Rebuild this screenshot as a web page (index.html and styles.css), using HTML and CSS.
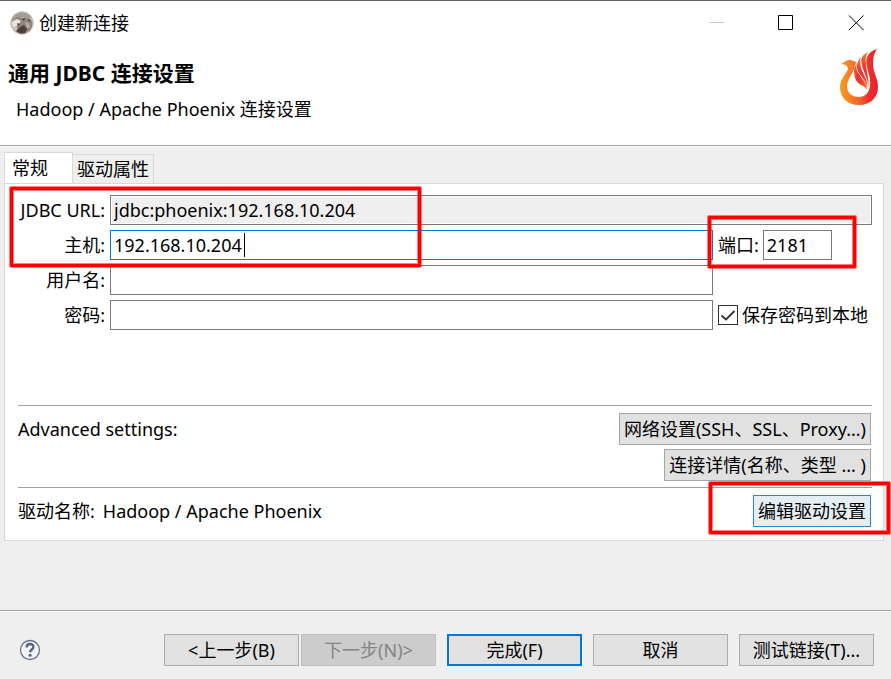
FILE: index.html
```
<!DOCTYPE html>
<html lang="zh-CN">
<head>
    <meta charset="UTF-8">
    <meta name="viewport" content="width=device-width, initial-scale=1.0">
    <title>创建新连接</title>

    <link rel="stylesheet" href="styles.css">
</head>
<body>
    <div class="dialog">
        <div class="titlebar">
            <svg class="app-icon" viewBox="0 0 24 24">
                <circle cx="12" cy="12" r="11.5" fill="#c9c1bc"/>
                <path d="M1 9 Q5 2 12 1 Q19 2 22 7 L17 8 L12 6 L6 8 L3 13Z" fill="#a59c96"/>
                <path d="M4 8 Q8 4 12 7 L18 7 L22 10 Q24 15 20 20 L15 22 Q15 17 12 16 L9 19 Q6 17 7 13Z" fill="#92857d"/>
                <path d="M2 11 L7 8 L11 10 L8 14 L3 16Z" fill="#ece7e2"/>
                <path d="M10 16 L14 14 L17 18 L15 23 L10 23 L6 20Z" fill="#4d4039"/>
                <path d="M12 8 L15 7 L14 10Z M18 8 L21 9 L19 11Z M7 12 L10 13 L8 15Z" fill="#51443d"/>
                <path d="M15 11 L19 12 L20 17 L17 17Z" fill="#b8aaa0"/>
                <circle cx="12" cy="12" r="11.2" fill="none" stroke="#c4c0bd"/>
            </svg>
            <span class="caption">创建新连接</span>
            <div class="window-btns">
                <button type="button" aria-label="最小化" disabled><svg viewBox="0 0 16 16"><path d="M1 7.5H16" stroke="#ccc"/></svg></button>
                <button type="button" aria-label="最大化"><svg viewBox="0 0 16 16"><path d="M0.5 0.5H14.5V14.5H0.5Z" fill="none" stroke="#000"/></svg></button>
                <button type="button" aria-label="关闭"><svg viewBox="0 0 16 16"><path d="M1 0.5L15.5 15M15.5 0.5L1 15" stroke="#000"/></svg></button>
            </div>
        </div>

        <div class="header">
            <div>
                <h1>通用 JDBC 连接设置</h1>
                <p>Hadoop / Apache Phoenix 连接设置</p>
            </div>
            <svg class="logo" viewBox="0 0 40 58">
                <defs>
                    <linearGradient id="flame" x1="0" y1="0" x2="1" y2="0">
                        <stop offset="0" stop-color="#f99d1e"/>
                        <stop offset="0.5" stop-color="#f3632a"/>
                        <stop offset="0.8" stop-color="#ee2a2b"/>
                        <stop offset="1" stop-color="#ee1f2d"/>
                    </linearGradient>
                    <linearGradient id="feather" x1="0" y1="0" x2="0" y2="1">
                        <stop offset="0" stop-color="#f47a2d"/>
                        <stop offset="0.45" stop-color="#ee3030"/>
                        <stop offset="0.7" stop-color="#ef442e"/>
                        <stop offset="1" stop-color="#f8a13a"/>
                    </linearGradient>
                </defs>
                <path fill="url(#flame)" d="M38 1 C28 4 26 11 28 19 C29 25 32 30 31 38 C30 45 26 49 20 49 C13 49 8 45 8 38 C8 32 13 27 15 21 C16 17 16 15 18 14 C15 14 14 12 10 12 C7 12 5 15 2 16 C5 16 8 17 9 20 C9 25 1 29 1 39 C1 50 9 57 20 57 C32 57 39 49 39 39 C39 29 34 25 34 16 C34 10 35 5 38 1Z"/>
                <path fill="url(#feather)" d="M29 4 C23 7 21 11 23 17 C24 24 30 31 29 42 C31 31 27 23 27 16 C26 11 27 8 29 4Z"/>
                <path fill="url(#feather)" d="M22 9 C17 15 17 20 20 25 C24 31 28 34 28 42 C30 32 24 27 22 20 C21 15 21 12 22 9Z"/>
                <path fill="url(#feather)" d="M18 15 C14 20 14 26 18 30 C22 34 26 36 28 42 C28 34 23 32 20 26 C17 22 17 19 18 15Z"/>
                <path fill="url(#feather)" d="M16 22 C14 29 18 35 22 37 C24 38 26 39 28 42 C27 36 23 34 20 31 C17 28 16 25 16 22Z"/>
            </svg>
        </div>

        <div class="content">
            <div class="tabs" role="tablist">
                <button type="button" class="tab active" role="tab" aria-selected="true">常规</button>
                <button type="button" class="tab" role="tab" aria-selected="false">驱动属性</button>
            </div>

            <div class="panel">
                <form class="form">
                    <label for="url">JDBC URL:</label>
                    <input class="url" id="url" type="text" value="jdbc:phoenix:192.168.10.204" readonly>

                    <label for="host">主机:</label>
                    <div class="host">
                        <input id="host" type="text" value="192.168.10.204">
                        <span class="caret"></span>
                    </div>
                    <div class="side">
                        <label for="port">端口:</label>
                        <input class="port" id="port" type="text" value="2181">
                    </div>

                    <label for="user">用户名:</label>
                    <input id="user" type="text">

                    <label class="new-row" for="password">密码:</label>
                    <input id="password" type="password">
                    <div class="side">
                        <input class="check" id="save" type="checkbox" checked>
                        <label for="save">保存密码到本地</label>
                    </div>
                </form>

                <div class="row advanced">
                    <span class="text">Advanced settings:</span>
                    <div class="buttons">
                        <button type="button">网络设置(SSH、SSL、Proxy...)</button>
                        <button type="button">连接详情(名称、类型 ... )</button>
                    </div>
                </div>

                <div class="row">
                    <span class="text">驱动名称:</span>
                    <span class="text driver">Hadoop / Apache Phoenix</span>
                    <div class="buttons">
                        <button type="button" class="hot">编辑驱动设置</button>
                    </div>
                </div>

                <div class="mark mark-url"></div>
                <div class="mark mark-port"></div>
                <div class="mark mark-driver"></div>
            </div>
        </div>

        <div class="footer">
            <button type="button" class="help" aria-label="帮助">
                <svg viewBox="0 0 22 22">
                    <circle cx="11" cy="11" r="9.5" fill="#f5f6f8" stroke="#66728c" stroke-width="1.3"/>
                    <path d="M7.6 8.4 C7.6 3.8 14.6 4 14.4 8 C14.3 10.4 11.1 10.6 11.1 13.3" fill="none" stroke="#56637f" stroke-width="2.4"/>
                    <circle cx="11.1" cy="16.3" r="1.5" fill="#56637f"/>
                </svg>
            </button>
            <button type="button" class="btn">&lt;上一步(B)</button>
            <button type="button" class="btn next" disabled>下一步(N)&gt;</button>
            <button type="button" class="btn default">完成(F)</button>
            <button type="button" class="btn">取消</button>
            <button type="button" class="btn">测试链接(T)...</button>
        </div>
    </div>
</body>
</html>
```
FILE: styles.css
```
*{
    margin: 0;
    padding: 0;
    box-sizing: border-box;
}

body, input, button{
    font-family: 'Noto Sans', 'Noto Sans CJK SC', sans-serif;
    font-size: 18px;
    line-height: 28px;
    color: #000;
}

body{
    background-color: #efefef;
}

button{
    white-space: nowrap;
}

.dialog{
    display: flex;
    flex-direction: column;
    min-height: 100vh;
    border-top: 1px solid #66656b;
}

/* title bar */
.titlebar{
    display: flex;
    align-items: center;
    height: 44px;
    padding-left: 10px;
    background: #fff;
}

.app-icon{
    width: 24px;
    height: 24px;
    margin-right: 5px;
}

.window-btns{
    display: flex;
    margin-left: auto;
}

.window-btns button{
    display: flex;
    align-items: center;
    justify-content: center;
    width: 70px;
    height: 44px;
    border: 0;
    background: none;
}

.window-btns svg{
    width: 16px;
    height: 16px;
}

.header{
    display: flex;
    justify-content: space-between;
    height: 101px;
    padding: 3px 12px 0 8px;
    background: #fff;
    border-bottom: 1px solid #a0a0a0;
}

.header h1{
    font-size: 21px;
    line-height: 28px;
    margin-top: 11px;
}

.header p{
    margin: 8px 0 0 8px;
}

.logo{
    width: 40px;
    height: 58px;
}

/* tabs */
.content{
    flex: 1;
    padding: 5px 7px 0 4px;
    border-top: 1px solid #fff;
}

.tabs{
    display: flex;
    align-items: flex-end;
}

.tab{
    height: 29px;
    padding: 0 4px;
    border: 1px solid #d9d9d9;
    border-left: 0;
    border-bottom: 0;
    background: #efefef;
}

.tab.active{
    position: relative;
    width: 69px;
    height: 32px;
    padding: 0 0 2px 7px;
    margin-bottom: -1px;
    border-left: 1px solid #d9d9d9;
    background: #fff;
    text-align: left;
}

.panel{
    position: relative;
    padding: 11px 11px 13px 13px;
    background: #fff;
    border: 1px solid #d9d9d9;
}

.form{
    display: grid;
    grid-template-columns: 87px 1fr 154px;
    gap: 5px;
    align-items: center;
    margin-bottom: 75px;
}

.form > label{
    text-align: right;
    white-space: nowrap;
}

.form .new-row{
    grid-column: 1;
}

.form input{
    width: 100%;
    height: 30px;
    padding: 0 3px;
    border: 1px solid #7a7a7a;
    outline: 0;
    background: #fff;
}

.form .url{
    grid-column: 2 / 4;
    background: #efefef;
    box-shadow: inset 0 0 0 1px #fff;
}

.host{
    position: relative;
    height: 30px;
}

.form .host input{
    border-color: #0078d7;
}

.caret{
    position: absolute;
    left: 134px;
    top: 3px;
    width: 1px;
    height: 24px;
    background: #000;
}

.side{
    display: flex;
    align-items: center;
    gap: 4px;
    white-space: nowrap;
}

.form .port{
    width: 69px;
}

.form .check{
    appearance: none;
    flex: none;
    width: 20px;
    height: 20px;
    padding: 0;
    border-color: #333;
    background: url("data:image/svg+xml,%3Csvg xmlns='http://www.w3.org/2000/svg' viewBox='0 0 18 18'%3E%3Cpath d='M2.5 9.5L7 13.5L15.5 5' fill='none' stroke='%23333' stroke-width='1.8'/%3E%3C/svg%3E");
}

.row{
    display: flex;
    padding-top: 7px;
    border-top: 1px solid #a0a0a0;
}

.advanced{
    padding-bottom: 6px;
}

.text{
    line-height: 32px;
}

.driver{
    margin-left: 8px;
}

.buttons{
    display: flex;
    flex-direction: column;
    align-items: flex-end;
    gap: 4px;
    margin-left: auto;
    padding-right: 1px;
}

.buttons button{
    height: 32px;
    padding: 0 4px;
    border: 1px solid #a0a6ab;
    background: #e1e1e1;
}

.buttons .hot{
    border-color: #2c84c9;
    background: #e5edf5;
}

/* red frames around the fields to fill in */
.mark{
    position: absolute;
    border: 3px solid #f00;
    border-radius: 1px;
    box-shadow: 0 0 0 1px rgba(255, 0, 0, 0.5), inset 0 0 0 1px rgba(255, 0, 0, 0.5);
    pointer-events: none;
}

.mark-url{
    left: 5px;
    top: 3px;
    width: 411px;
    height: 80px;
}

.mark-port{
    right: 27px;
    top: 32px;
    width: 148px;
    height: 52px;
}

.mark-driver{
    right: -7px;
    bottom: 6px;
    width: 181px;
    height: 52px;
}

/* footer */
.footer{
    display: flex;
    align-items: center;
    height: 69px;
    padding: 9px 17px 0 19px;
    border-top: 1px solid #a0a0a0;
    box-shadow: inset 0 1px #fff;
}

.help{
    width: 22px;
    height: 22px;
    margin-right: auto;
    border: 0;
    background: none;
}

.help svg{
    display: block;
}

.btn{
    width: 135px;
    height: 32px;
    margin-left: 11px;
    border: 1px solid #adadad;
    background: #e1e1e1;
}

.btn.next{
    margin-left: 2px;
    border-color: #bfbfbf;
    background: #ccc;
    color: #838383;
}

.btn.default{
    border: 2px solid #0078d7;
}
```
